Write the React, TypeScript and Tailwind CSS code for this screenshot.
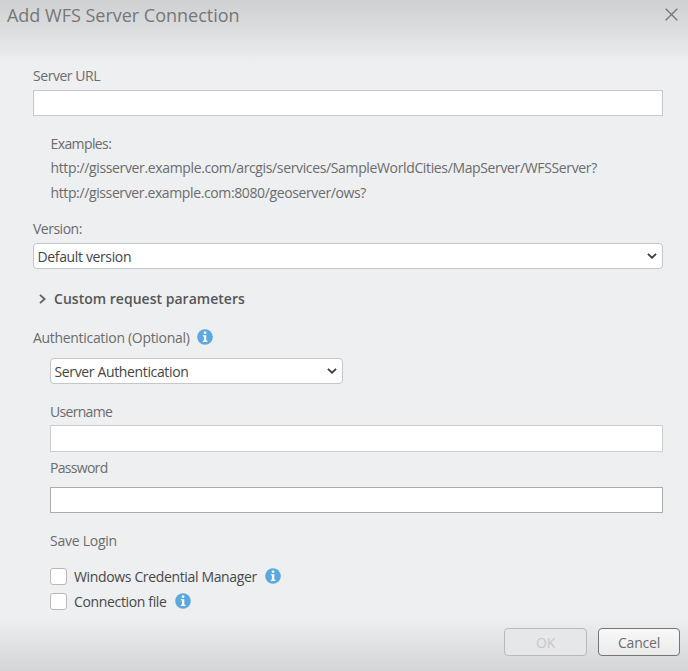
import React from 'react';

const InfoIcon = () => (
  <svg viewBox="0 0 16 16" className="-mt-0.5 ml-2 h-4 w-4 shrink-0">
    <circle cx="8" cy="8" r="7.8" fill="#5ba8de" />
    <rect x="6.8" y="2.5" width="2.5" height="2.3" rx="0.6" fill="#fff" />
    <path d="M5.8 6.2h3.5v5.6h1.1v1.1H5.8v-1.1h1.1V7.3H5.8z" fill="#fff" />
  </svg>
);

const Chevron = () => (
  <svg viewBox="0 0 10 6" className="pointer-events-none absolute top-[10px] right-[6px] h-[6px] w-[10px]">
    <path d="M0.9 0.8L5 4.7L9.1 0.8" fill="none" stroke="#3c3d3e" strokeWidth="1.8" />
  </svg>
);

interface DropdownProps {
  value: string;
  className: string;
}

const Dropdown: React.FC<DropdownProps> = ({ value, className }) => (
  <div className={`relative h-[26px] ${className}`}>
    <select className="block h-full w-full appearance-none rounded-[4px] border border-[#c5c6c9] bg-white pt-[2px] pl-[3.5px] leading-5 tracking-[-0.36px] text-[#444546] outline-none">
      <option>{value}</option>
    </select>
    <Chevron />
  </div>
);

const saveOptions = ['Windows Credential Manager', 'Connection file'];

const App: React.FC = () => {
  return (
    <div className="flex h-[671px] w-[688px] flex-col overflow-hidden bg-[#eeeff1] bg-[linear-gradient(to_bottom,#cfd0d1_0px,#dddedf_32px,#eeeff1_64px,#eeeff1_617px,#d4d5d6_671px)] font-['Open_Sans','Noto_Sans',sans-serif] text-[14px] leading-5 tracking-[-0.35px] text-[#6b6c6d]">
      <header className="flex h-[31px] items-center justify-between pr-[10px] pl-[7px]">
        <h1 className="-mt-px text-[18px] tracking-[-0.01px] text-[#767778]">Add WFS Server Connection</h1>
        <button aria-label="Close" className="-mt-[3px]">
          <svg viewBox="0 0 13 13" className="h-[13px] w-[13px]">
            <path d="M0.7 0.7L12.3 12.3M12.3 0.7L0.7 12.3" fill="none" stroke="#737475" strokeWidth="1.3" />
          </svg>
        </button>
      </header>

      <main className="mt-[35px] flex flex-col pr-[25px] pl-[33px]">
        <label className="tracking-[-0.45px]">Server URL</label>
        <input className="mt-1 h-[26px] border border-[#c5c6c9] bg-white outline-none" />

        <div className="mt-[18px] pl-[17.5px]">
          <p className="tracking-[-0.6px]">Examples:</p>
          <p className="mt-1 tracking-[-0.36px]">http://gisserver.example.com/arcgis/services/SampleWorldCities/MapServer/WFSServer?</p>
          <p className="mt-[5px] tracking-[-0.38px]">http://gisserver.example.com:8080/geoserver/ows?</p>
        </div>

        <label className="mt-4 tracking-[-0.5px]">Version:</label>
        <Dropdown value="Default version" className="mt-1" />

        <button className="mt-5 flex items-center pl-[6px] font-semibold tracking-[0.02px] text-[#555657]">
          <svg viewBox="0 0 7 10" className="-mt-px h-[10px] w-[7px]">
            <path d="M1 0.9L5.6 5L1 9.1" fill="none" stroke="#626364" strokeWidth="1.9" />
          </svg>
          <span className="ml-2">Custom request parameters</span>
        </button>

        <div className="mt-[19px] flex items-center">
          <span className="tracking-[-0.31px]">Authentication (Optional)</span>
          <InfoIcon />
        </div>

        <div className="flex flex-col pl-[17px]">
          <Dropdown value="Server Authentication" className="mt-[10px] w-[293px]" />
          <label className="mt-[18px] tracking-[-0.7px]">Username</label>
          <input className="mt-[3px] h-[27px] border border-[#cccdd0] bg-white outline-none" />
          <label className="mt-[6px] tracking-[-0.7px]">Password</label>
          <input type="password" className="mt-[9px] h-[26px] border border-[#aaabac] bg-white outline-none" />

          <span className="mt-[18px] tracking-[-0.25px]">Save Login</span>
          <div className="mt-4 flex flex-col gap-[5px]">
            {saveOptions.map((option) => (
              <label key={option} className="flex h-5 items-center tracking-[-0.35px] text-[#484949]">
                <input type="checkbox" className="-mt-0.5 h-[17px] w-[17px] appearance-none rounded-[3px] border border-[#b9babc] bg-white" />
                <span className="ml-[7px]">{option}</span>
                <InfoIcon />
              </label>
            ))}
          </div>
        </div>
      </main>

      <footer className="mt-4 flex justify-end gap-[11px] pr-2 tracking-[-0.22px]">
        <button disabled className="h-[28px] w-[83px] rounded-[4px] border-[1.5px] border-[#b9babb] bg-[#e6e7e8] pt-px text-[#c6c7c8]">OK</button>
        <button className="h-[28px] w-[82px] rounded-[4px] border-[1.5px] border-[#747576] bg-linear-to-b from-[#f8f8f8] to-[#ebebeb] pt-px text-[#6c6d6e]">Cancel</button>
      </footer>
    </div>
  );
};

export default App;
